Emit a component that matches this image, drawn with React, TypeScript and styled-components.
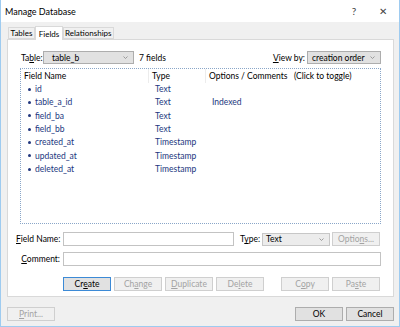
import React from "react";
import styled, { createGlobalStyle } from "styled-components";

const Global = createGlobalStyle`
  html, body { margin: 0; padding: 0; background: #f0f0f0; }
  body { font-family: Lato, "Open Sans", sans-serif; font-size: 8.5px; color: #000; }
  * { box-sizing: border-box; }
`;

const Window = styled.div`
  width: 400px;
  height: 327px;
  border: 1px solid #9ecbf0;
  border-top: none;
  background: #f0f0f0;
  display: flex;
  flex-direction: column;
  overflow: hidden;
`;

const TitleBar = styled.div`
  height: 22px;
  flex-shrink: 0;
  background: #fff;
  display: flex;
  align-items: center;
  padding-left: 4px;
  font-size: 9px;
`;

const Title = styled.div`
  flex: 1;
`;

const TitleBtn = styled.div<{ $w: number }>`
  width: ${(p) => p.$w}px;
  flex-shrink: 0;
  text-align: center;
  font-size: 10px;
  color: #444;
`;

const Body = styled.div`
  padding: 5px 5px 0 6px;
  display: flex;
  flex-direction: column;
`;

const TabStrip = styled.div`
  display: flex;
  align-items: flex-end;
  height: 12px;
  padding-left: 1px;
  position: relative;
  z-index: 1;
`;

const Tab = styled.div<{ $active?: boolean; $w: number }>`
  min-width: ${(p) => p.$w}px;
  padding: 0 1px;
  font-size: 8px;
  height: ${(p) => (p.$active ? 14 : 12)}px;
  margin-bottom: ${(p) => (p.$active ? -1 : 0)}px;
  border: 1px solid #d9d9d9;
  border-bottom: ${(p) => (p.$active ? "none" : "1px solid #d9d9d9")};
  background: ${(p) => (p.$active ? "#fff" : "#f0f0f0")};
  display: flex;
  align-items: center;
  justify-content: center;
  position: relative;
  z-index: ${(p) => (p.$active ? 2 : 1)};
  flex-shrink: 0;
  white-space: nowrap;
`;

const TabPanel = styled.div`
  background: #fff;
  border: 1px solid #d9d9d9;
  height: 258px;
  padding: 11px 12px 0 12px;
  display: flex;
  flex-direction: column;
`;

const TopRow = styled.div`
  display: flex;
  align-items: center;
  height: 13px;
`;

const Label = styled.span<{ $w?: number; $right?: boolean }>`
  display: inline-block;
  flex-shrink: 0;
  ${(p) => (p.$w ? `width: ${p.$w}px;` : "")}
  ${(p) => (p.$right ? "text-align: right; padding-right: 3px;" : "")}
  white-space: nowrap;
`;

const FormLabel = styled(Label)`
  margin-left: -4px;
`;

const U = styled.span`
  text-decoration: underline;
`;

const Combo = styled.div<{ $w: number; $light?: boolean; $pl?: number }>`
  width: ${(p) => p.$w}px;
  flex-shrink: 0;
  height: 13px;
  border: 1px solid ${(p) => (p.$light ? "#c7c7c7" : "#adadad")};
  background: ${(p) => (p.$light ? "#ececec" : "#e1e1e1")};
  display: flex;
  align-items: center;
  padding-left: ${(p) => p.$pl ?? 8}px;
  padding-right: 5px;
`;

const ComboText = styled.span`
  flex: 1;
  white-space: nowrap;
`;

const Chevron = () => (
  <svg width="5" height="3" viewBox="0 0 5 3">
    <path d="M0.5 0.5 L2.5 2.5 L4.5 0.5" stroke="#888" strokeWidth="0.8" fill="none" />
  </svg>
);

const Spacer = styled.div`
  flex: 1;
`;

const ListBox = styled.div`
  height: 156px;
  margin-top: 4px;
  border: 1px dotted #8aa6c8;
  display: flex;
  flex-direction: column;
  flex-shrink: 0;
`;

const HeaderRow = styled.div`
  display: flex;
  height: 14px;
  align-items: center;
  flex-shrink: 0;
`;

const HeadCell = styled.div<{ $w?: number }>`
  ${(p) => (p.$w ? `width: ${p.$w}px; flex-shrink: 0;` : "flex: 1; min-width: 0;")}
  padding-left: 3px;
  height: 100%;
  display: flex;
  align-items: center;
  border-right: 1px solid #ececec;
  white-space: pre;
  overflow: hidden;
`;

const Rows = styled.div`
  margin-top: -0.5px;
`;

const Row = styled.div`
  display: flex;
  height: 13.33px;
  align-items: center;
  color: #21367e;
`;

const Cell = styled.div<{ $w?: number; $pl: number }>`
  ${(p) => (p.$w ? `width: ${p.$w}px; flex-shrink: 0;` : "flex: 1; min-width: 0;")}
  padding-left: ${(p) => p.$pl}px;
  display: flex;
  align-items: center;
  white-space: nowrap;
`;

const Bullet = styled.span`
  width: 3px;
  height: 3px;
  background: #21367e;
  border-radius: 50%;
  margin-right: 4px;
  flex-shrink: 0;
`;

const FormRow = styled.div<{ $mt: number }>`
  display: flex;
  align-items: center;
  height: 14px;
  margin-top: ${(p) => p.$mt}px;
  flex-shrink: 0;
`;

const Input = styled.div<{ $w?: number }>`
  ${(p) => (p.$w ? `width: ${p.$w}px; flex-shrink: 0;` : "flex: 1;")}
  height: 14px;
  border: 1px solid #c3c3c3;
  background: #fff;
`;

const Button = styled.div<{ $w?: number; $disabled?: boolean; $default?: boolean }>`
  width: ${(p) => p.$w ?? 48}px;
  flex-shrink: 0;
  height: 14px;
  border: 1px solid ${(p) => (p.$default ? "#3c8ad6" : p.$disabled ? "#cfcfcf" : "#adadad")};
  background: ${(p) => (p.$disabled ? "#f0f0f0" : "#e1e1e1")};
  color: ${(p) => (p.$disabled ? "#a3a3a3" : "#000")};
  display: flex;
  align-items: center;
  justify-content: center;
  white-space: nowrap;
`;

const ButtonRow = styled.div`
  display: flex;
  align-items: center;
  margin-top: 11px;
  padding-left: 43px;
  padding-right: 1px;
  gap: 3px;
`;

const Footer = styled.div`
  display: flex;
  align-items: center;
  padding: 10px 5px 0 6px;
  gap: 3px;
`;

const fields: [string, string, string][] = [
  ["id", "Text", ""],
  ["table_a_id", "Text", "Indexed"],
  ["field_ba", "Text", ""],
  ["field_bb", "Text", ""],
  ["created_at", "Timestamp", ""],
  ["updated_at", "Timestamp", ""],
  ["deleted_at", "Timestamp", ""],
];

export default function App() {
  return (
    <>
      <Global />
      <Window>
        <TitleBar>
          <Title>Manage Database</Title>
          <TitleBtn $w={26}>?</TitleBtn>
          <TitleBtn $w={32}>✕</TitleBtn>
        </TitleBar>
        <Body>
          <TabStrip>
            <Tab $w={27}>Tables</Tab>
            <Tab $w={28} $active>
              Fields
            </Tab>
            <Tab $w={50}>Relationships</Tab>
          </TabStrip>
          <TabPanel>
            <TopRow>
              <Label $w={23} style={{ paddingLeft: 1 }}>
                Ta<U>b</U>le:
              </Label>
              <Combo $w={91}>
                <ComboText>table_b</ComboText>
                <Chevron />
              </Combo>
              <Label style={{ marginLeft: 5 }}>7 fields</Label>
              <Spacer />
              <Label style={{ marginRight: 2 }}>
                <U>V</U>iew by:
              </Label>
              <Combo $w={74} $pl={4}>
                <ComboText>creation order</ComboText>
                <Chevron />
              </Combo>
            </TopRow>
            <ListBox>
              <HeaderRow>
                <HeadCell $w={128}>Field Name</HeadCell>
                <HeadCell $w={57}>Type</HeadCell>
                <HeadCell style={{ borderRight: "none" }}>{"Options / Comments   (Click to toggle)"}</HeadCell>
              </HeaderRow>
              <Rows>
                {fields.map(([n, t, o]) => (
                  <Row key={n}>
                    <Cell $w={128} $pl={7}>
                      <Bullet />
                      {n}
                    </Cell>
                    <Cell $w={57} $pl={6}>
                      {t}
                    </Cell>
                    <Cell $pl={6}>{o}</Cell>
                  </Row>
                ))}
              </Rows>
            </ListBox>
            <FormRow $mt={8}>
              <FormLabel $w={47} $right>
                <U>F</U>ield Name:
              </FormLabel>
              <Input $w={171} />
              <Label style={{ marginLeft: 6, marginRight: 2 }}>
                T<U>y</U>pe:
              </Label>
              <Combo $w={68} $light $pl={3}>
                <ComboText>Text</ComboText>
                <Chevron />
              </Combo>
              <Spacer />
              <Button $w={48} $disabled style={{ marginRight: 1 }}>
                Optio<U>n</U>s...
              </Button>
            </FormRow>
            <FormRow $mt={6}>
              <FormLabel $w={47} $right>
                <U>C</U>omment:
              </FormLabel>
              <Input />
            </FormRow>
            <ButtonRow>
              <Button $default>
                Cr<U>e</U>ate
              </Button>
              <Button $disabled>
                Ch<U>a</U>nge
              </Button>
              <Button $disabled>
                <U>D</U>uplicate
              </Button>
              <Button $disabled>
                De<U>l</U>ete
              </Button>
              <Spacer />
              <Button $disabled>
                C<U>o</U>py
              </Button>
              <Button $disabled>
                Pa<U>s</U>te
              </Button>
            </ButtonRow>
          </TabPanel>
        </Body>
        <Footer>
          <Button $disabled>
            <U>P</U>rint...
          </Button>
          <Spacer />
          <Button>OK</Button>
          <Button>Cancel</Button>
        </Footer>
      </Window>
    </>
  );
}
